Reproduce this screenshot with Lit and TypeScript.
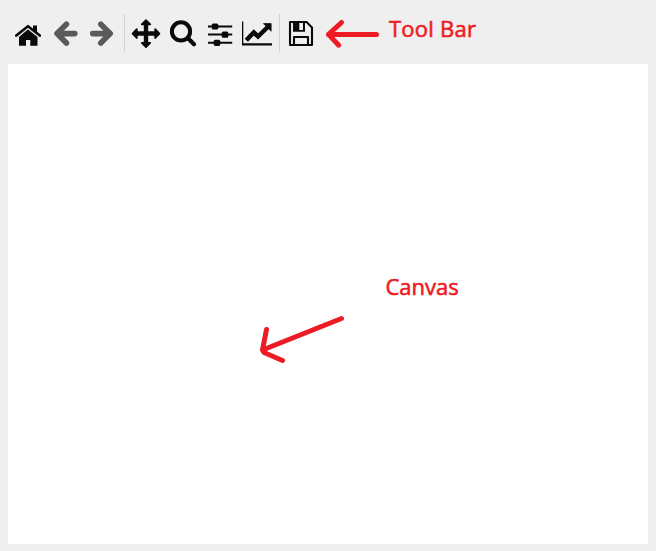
import { LitElement, html, css, svg } from "lit";
import { customElement } from "lit/decorators.js";

// Each glyph is drawn in toolbar coordinates; `x` is the left edge of its button.
const icons = {
  home: { x: 10, label: "Home", art: svg`
    <path d="M19 37 28 29.3 37.5 37V45.8H30.3V40H26V45.8H19Z"/>
    <path d="M33 25.5H37V33L33 29.5Z"/>
    <path d="M16.3 35.6 28 26.2 39.8 35.6" fill="none" stroke="#0a0a0a" stroke-width="2.6" stroke-linecap="round" stroke-linejoin="round"/>
    <path d="M17.6 37.2 28 28.9 38.5 37.2" fill="none" stroke="#d8d0d2" stroke-width="0.9"/>` },
  back: { x: 47, label: "Back", art: svg`
    <path class="dim" d="M66.4 24.3 57 33.6 66.4 43M57.5 33.6H74.8"/>` },
  forward: { x: 84, label: "Forward", art: svg`
    <path class="dim" d="M100.8 24.3 110.2 33.6 100.8 43M110 33.6H92.7"/>` },
  pan: { x: 128, label: "Pan", art: svg`
    <path stroke="#0a0a0a" stroke-width="1.8" stroke-linejoin="round" d="M146 20.2 150.2 24.3H147.3V32.2H155.2V29.2L159.4 33.6 155.2 38V34.9H147.3V42.8H150.2L146 47 141.8 42.8H144.7V34.9H136.8V38L132.6 33.6 136.8 29.2V32.2H144.7V24.3H141.8Z"/>` },
  zoom: { x: 165, label: "Zoom", art: svg`
    <circle cx="181" cy="31.4" r="9.1" fill="none" stroke="#0a0a0a" stroke-width="4"/>
    <path d="M188 38.3 194 44.3" stroke="#0a0a0a" stroke-width="4.2" stroke-linecap="round"/>` },
  subplots: { x: 202, label: "Subplots", art: svg`
    <path d="M208 25.4H232.2V27.4H208ZM208 33.6H232.2V35.6H208ZM208 41.8H232.2V43.8H208Z"/>
    <rect x="211.7" y="23.4" width="6.6" height="6.2" rx="1.6"/>
    <rect x="221.7" y="31.6" width="6.6" height="6.2" rx="1.6"/>
    <rect x="213.7" y="39.7" width="6.6" height="6.2" rx="1.6"/>` },
  axes: { x: 239, label: "Axes", art: svg`
    <path d="M242 21.5H243.3V43.3H272V45.6H242Z"/>
    <path d="M246.3 40.3 253.8 32.5 258 36.5 267.8 27" fill="none" stroke="#0a0a0a" stroke-width="4.5"/>
    <path d="M263.5 23.6H271.1V31.2Z" stroke="#0a0a0a" stroke-width="0.8" stroke-linejoin="round"/>` },
  save: { x: 283, label: "Save", art: svg`
    <path fill="none" stroke="#0a0a0a" stroke-width="2.1" stroke-linejoin="round" d="M290 22H306.5L312 27.5V45H290ZM294 45V37H308V45"/>
    <path fill-rule="evenodd" d="M293 22H305V31.8H293ZM299.3 23V30H303V23Z"/>` },
};

@customElement("app-root")
export class AppRoot extends LitElement {
  static styles = css`
    :host {
      display: block;
      position: relative;
      box-sizing: border-box;
      width: 656px;
      height: 551px;
      padding: 0 8px 7px;
      overflow: hidden;
      background: #efefef;
      color: #ed1c24;
      font: 22px/30px "Open Sans", "Noto Sans", sans-serif;
    }
    .toolbar {
      display: flex;
      align-items: center;
      height: 64px;
      padding-left: 2px;
    }
    .tool {
      flex: none;
      width: 37px;
      height: 64px;
      padding: 0;
      border: 0;
      background: none;
    }
    .tool svg { display: block; fill: #0a0a0a; }
    .dim {
      fill: none;
      stroke: #5a5a5a;
      stroke-width: 5.6;
      stroke-linecap: round;
      stroke-linejoin: round;
    }
    .separator {
      flex: none;
      width: 1px;
      height: 38px;
      margin: 2px 3px 0;
      background: #dccfd1;
    }
    .canvas { height: 480px; background: #fff; }
    .note {
      position: absolute;
      white-space: nowrap;
      -webkit-text-stroke: 0.6px #ed1c24;
    }
    .note-toolbar { left: 389px; top: 13px; letter-spacing: 0.25px; }
    .note-canvas { left: 385.5px; top: 271px; }
    .arrows {
      position: absolute;
      inset: 0;
      fill: none;
      stroke: #ed1c24;
      stroke-width: 5;
      stroke-linecap: round;
      stroke-linejoin: round;
      pointer-events: none;
    }
  `;

  private tool(name: keyof typeof icons) {
    const { x, label, art } = icons[name];
    return html`<button class="tool" aria-label=${label}>
      <svg width="37" height="64" viewBox="${x} 0 37 64">${art}</svg>
    </button>`;
  }

  render() {
    return html`
      <div class="toolbar">
        ${this.tool("home")}${this.tool("back")}${this.tool("forward")}
        <div class="separator"></div>
        ${this.tool("pan")}${this.tool("zoom")}${this.tool("subplots")}${this.tool("axes")}
        <div class="separator"></div>
        ${this.tool("save")}
      </div>
      <div class="canvas"></div>
      <svg class="arrows" width="656" height="551">
        <path d="M376.5 34.4H328.5L341.5 22.5M328.5 34.4 338.7 45.2"/>
        <path d="M341.5 318.5 262.5 350 266.5 329.5M262.5 350 264 352.5 282.5 360.5"/>
      </svg>
      <div class="note note-toolbar">Tool Bar</div>
      <div class="note note-canvas">Canvas</div>
    `;
  }
}
